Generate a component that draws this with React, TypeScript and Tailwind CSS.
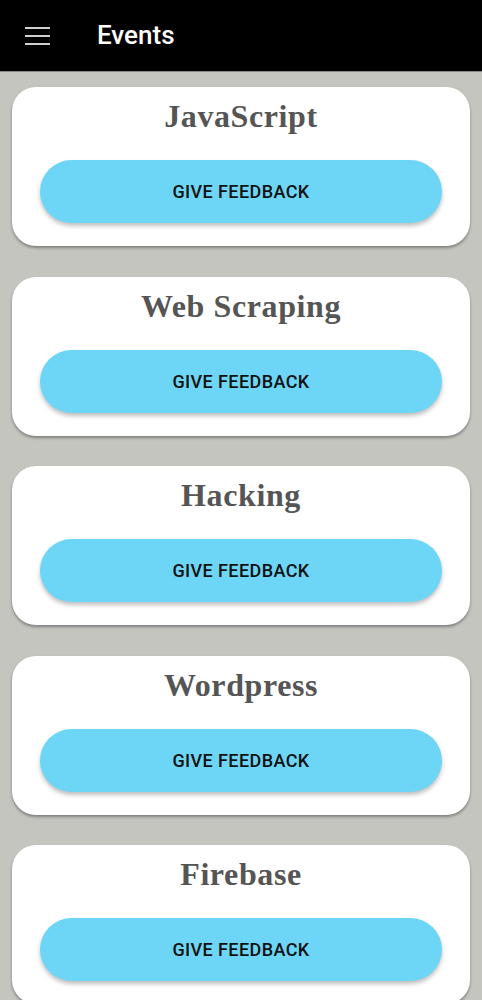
import React from "react";

const events = ["JavaScript", "Web Scraping", "Hacking", "Wordpress", "Firebase"];

const EventCard = ({ title }: { title: string }) => {
  return (
    <div className="mx-3 rounded-[24px] bg-white px-7 pt-[8px] pb-[23px] shadow-[0_2px_3px_rgba(0,0,0,0.35)]">
      <h2 className="h-[40px] text-center font-['Liberation_Serif',serif] text-[32px] font-bold leading-[42px] tracking-[0.6px] text-[#555555]">
        {title}
      </h2>
      <button className="mt-[25px] flex h-[63px] w-full items-center justify-center rounded-full bg-[#6dd6f6] font-['Roboto',sans-serif] text-[18px] font-medium tracking-[0.4px] text-[#111111] shadow-[0_3px_4px_rgba(0,0,0,0.25)]">
        GIVE FEEDBACK
      </button>
    </div>
  );
};

const App = () => {
  return (
    <div className="min-h-screen bg-[#c4c5bf]">
      <header className="flex h-[72px] items-center border-b border-[#8a8a86] bg-black">
        <div className="ml-[25px] flex w-[25px] flex-col gap-[6px]">
          <span className="h-[2px] w-full bg-[#cfcfcf]" />
          <span className="h-[2px] w-full bg-[#cfcfcf]" />
          <span className="h-[2px] w-full bg-[#cfcfcf]" />
        </div>
        <h1 className="ml-[47px] font-['Roboto',sans-serif] text-[26px] font-medium text-white">
          Events
        </h1>
      </header>
      <main className="flex flex-col gap-[30.5px] pt-[15px] pb-6">
        {events.map((e) => (
          <EventCard key={e} title={e} />
        ))}
      </main>
    </div>
  );
};

export default App;
